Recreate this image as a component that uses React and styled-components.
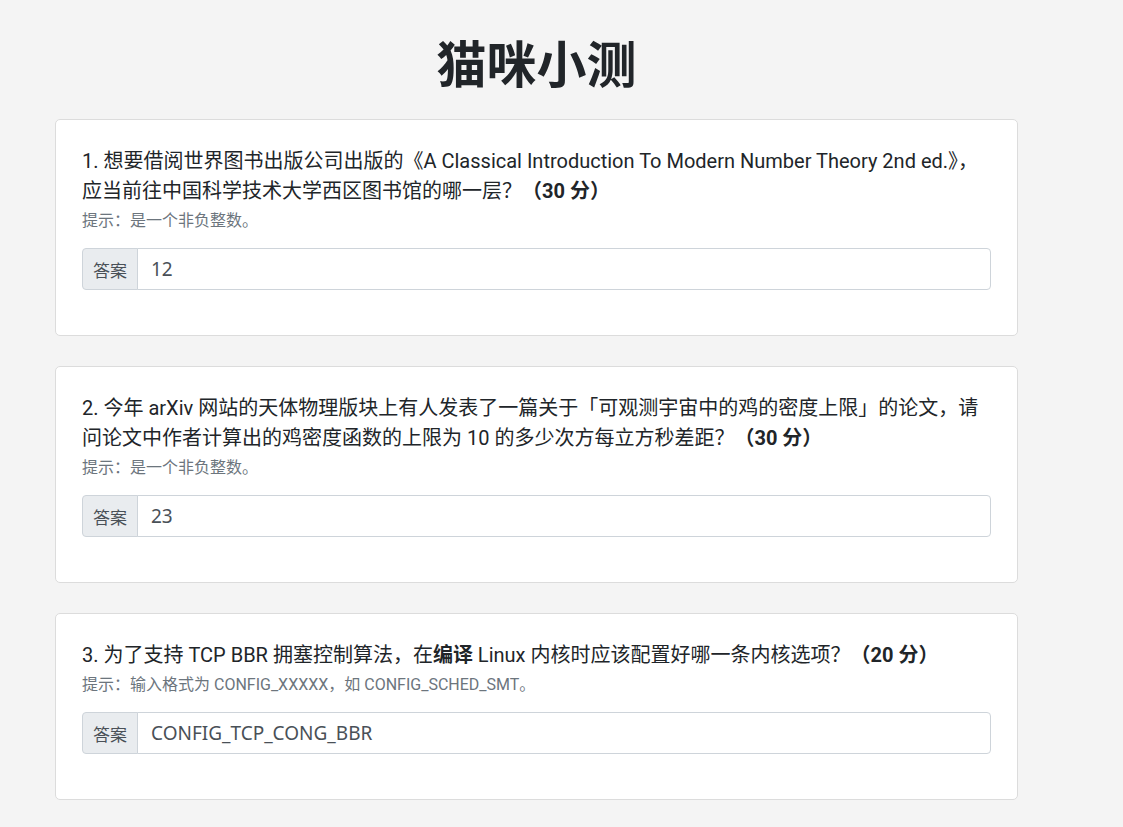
import React from 'react';
import styled, { createGlobalStyle } from 'styled-components';

const GlobalStyle = createGlobalStyle`
  html, body {
    margin: 0;
    padding: 0;
    background: #f4f4f4;
  }

  body {
    font-family: Roboto, "Noto Sans CJK SC", sans-serif;
    color: #212529;
  }

  * {
    box-sizing: border-box;
  }
`;

const Page = styled.div`
  width: 963px;
  margin-left: 55px;
  padding-bottom: 30px;
`;

const Title = styled.h1`
  margin: 32px 0 28px;
  font-size: 50px;
  line-height: 59px;
  font-weight: 700;
  text-align: center;
  font-family: "Noto Sans CJK SC", sans-serif;
`;

const QuizList = styled.div`
  display: flex;
  flex-direction: column;
  gap: 30px;
`;

const Card = styled.div`
  background: #fff;
  border: 1px solid #dcdcdc;
  border-radius: 5px;
  padding: 26px 26px 45px 26px;
`;

const Question = styled.p`
  margin: 0;
  font-size: 20px;
  line-height: 30px;

  b {
    font-weight: 700;
  }
`;

const Hint = styled.div`
  margin-top: 4px;
  font-size: 16px;
  line-height: 22px;
  color: #6c757d;
`;

const InputGroup = styled.div`
  display: flex;
  margin-top: 16px;
  height: 42px;
`;

const Addon = styled.span`
  display: flex;
  align-items: center;
  padding: 0 10px;
  font-size: 17px;
  color: #495057;
  background: #e9ecef;
  border: 1px solid #ced4da;
  border-radius: 4px 0 0 4px;
`;

const Field = styled.input`
  flex: 1;
  min-width: 0;
  margin-left: -1px;
  padding: 0 13px;
  font-family: "Noto Sans", "Noto Sans CJK SC", sans-serif;
  font-size: 19px;
  color: #495057;
  background: #fff;
  border: 1px solid #ced4da;
  border-radius: 0 4px 4px 0;
  outline: none;
`;

const questions = [
  {
    text: (
      <>
        1. 想要借阅世界图书出版公司出版的《A Classical Introduction To Modern Number Theory 2nd ed.》，应当前往中国科学技术大学西区图书馆的哪一层？<b>（30 分）</b>
      </>
    ),
    hint: '提示：是一个非负整数。',
    answer: '12',
  },
  {
    text: (
      <>
        2. 今年 arXiv 网站的天体物理版块上有人发表了一篇关于「可观测宇宙中的鸡的密度上限」的论文，请问论文中作者计算出的鸡密度函数的上限为 10 的多少次方每立方秒差距？<b>（30 分）</b>
      </>
    ),
    hint: '提示：是一个非负整数。',
    answer: '23',
  },
  {
    text: (
      <>
        3. 为了支持 TCP BBR 拥塞控制算法，在<b>编译</b> Linux 内核时应该配置好哪一条内核选项？<b>（20 分）</b>
      </>
    ),
    hint: '提示：输入格式为 CONFIG_XXXXX，如 CONFIG_SCHED_SMT。',
    answer: 'CONFIG_TCP_CONG_BBR',
  },
];

export default function App() {
  return (
    <>
      <GlobalStyle />
      <Page>
        <Title>猫咪小测</Title>
        <QuizList>
          {questions.map((q, index) => (
            <Card key={index}>
              <Question>{q.text}</Question>
              <Hint>{q.hint}</Hint>
              <InputGroup>
                <Addon>答案</Addon>
                <Field type="text" defaultValue={q.answer} />
              </InputGroup>
            </Card>
          ))}
        </QuizList>
      </Page>
    </>
  );
}
